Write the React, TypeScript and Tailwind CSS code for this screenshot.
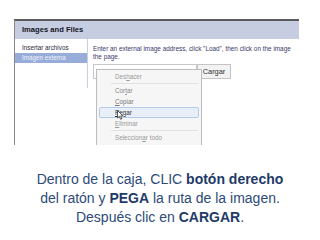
import React from "react";

function MenuItem({ label, tone, active }: { label: React.ReactNode; tone: string; active?: boolean }) {
  return (
    <div
      className={
        "h-[11px] mx-[2px] pl-[15px] flex items-center " +
        (active ? "bg-[#e8eff9] border border-[#b3cbeb] rounded-[2px] " : "border border-transparent ") +
        tone
      }
    >
      {label}
    </div>
  );
}

function ContextMenu() {
  return (
    <div className="absolute left-[96px] top-[69px] w-[106px] h-[76px] overflow-hidden bg-[#f6f6f6] border border-b-0 border-[#bdbdbd] text-[6.3px] pt-[1px]">
      <MenuItem label={<span>Des<u>h</u>acer</span>} tone="text-[#9a9a9a]" />
      <div className="h-[1px] bg-[#e2e2e2] ml-[14px] mr-[3px] my-[1px]" />
      <MenuItem label={<span>Cor<u>t</u>ar</span>} tone="text-[#8a8a8a]" />
      <MenuItem label={<span><u>C</u>opiar</span>} tone="text-[#777]" />
      <MenuItem label={<span><u>P</u>egar</span>} tone="text-[#333]" active />
      <MenuItem label={<span><u>E</u>liminar</span>} tone="text-[#9a9a9a]" />
      <div className="h-[1px] bg-[#e2e2e2] ml-[14px] mr-[3px] my-[1px]" />
      <MenuItem label={<span>Seleccion<u>a</u>r todo</span>} tone="text-[#9a9a9a]" />
      {/* cursor */}
      <svg className="absolute left-[20px] top-[40px]" width="7" height="10" viewBox="0 0 7 10">
        <path d="M0.5 0.5 L0.5 8 L2.3 6.3 L3.6 9.3 L4.8 8.8 L3.6 5.9 L6 5.9 Z" fill="#fff" stroke="#333" strokeWidth="0.8" />
      </svg>
    </div>
  );
}

export default function App() {
  return (
    <div className="w-[320px] h-[240px] bg-white relative overflow-hidden font-['Liberation_Sans',Arial,sans-serif]">
      <div className="ml-[14px] mt-[19px] w-[285px] h-[126px] border-l border-[#8a8a8a] border-t-2 border-t-[#5a5a5a] bg-white">
        <div className="h-[18px] bg-[#c6cde0] flex items-center pl-[7px] text-[7.6px] font-bold text-[#15151f]">
          Images and Files
        </div>
        <div className="flex">
          <div className="w-[73px] h-[49px] border-r border-[#c9cfdc] pt-[4px] text-[6.3px]">
            <div className="h-[10px] flex items-center pl-[7px] text-[#2a2a3a]">Insertar archivos</div>
            <div className="h-[10px] flex items-center pl-[7px] bg-[#98acd9] text-[#eef2fb]">Imagen externa</div>
          </div>
          <div className="flex-1 pl-[5px] pt-[6px] text-[6.4px] text-[#3a3a6a] leading-[8px]">
            <div className="whitespace-nowrap">Enter an external image address, click "Load", then click on the image</div>
            <div>the page.</div>
            <div className="flex items-center mt-[3px]">
              <div className="w-[104px] h-[15px] border border-[#c8c8c8] bg-white" />
              <div className="w-[34px] h-[15px] border border-[#c4c4c4] bg-[#f2f2f2] flex items-center justify-center text-[7.4px] text-[#333]">
                Cargar
              </div>
            </div>
          </div>
        </div>
      </div>
      <ContextMenu />
      <div className="mt-[25px] text-center text-[14px] leading-[19px] text-[#2d4a7a]">
        <div>
          Dentro de la caja, CLIC <b className="text-[#1f3a68]">botón derecho</b>
        </div>
        <div>
          del ratón y <b className="text-[#1f3a68]">PEGA</b> la ruta de la imagen.
        </div>
        <div>
          Después clic en <b className="text-[#1f3a68]">CARGAR</b>.
        </div>
      </div>
    </div>
  );
}
